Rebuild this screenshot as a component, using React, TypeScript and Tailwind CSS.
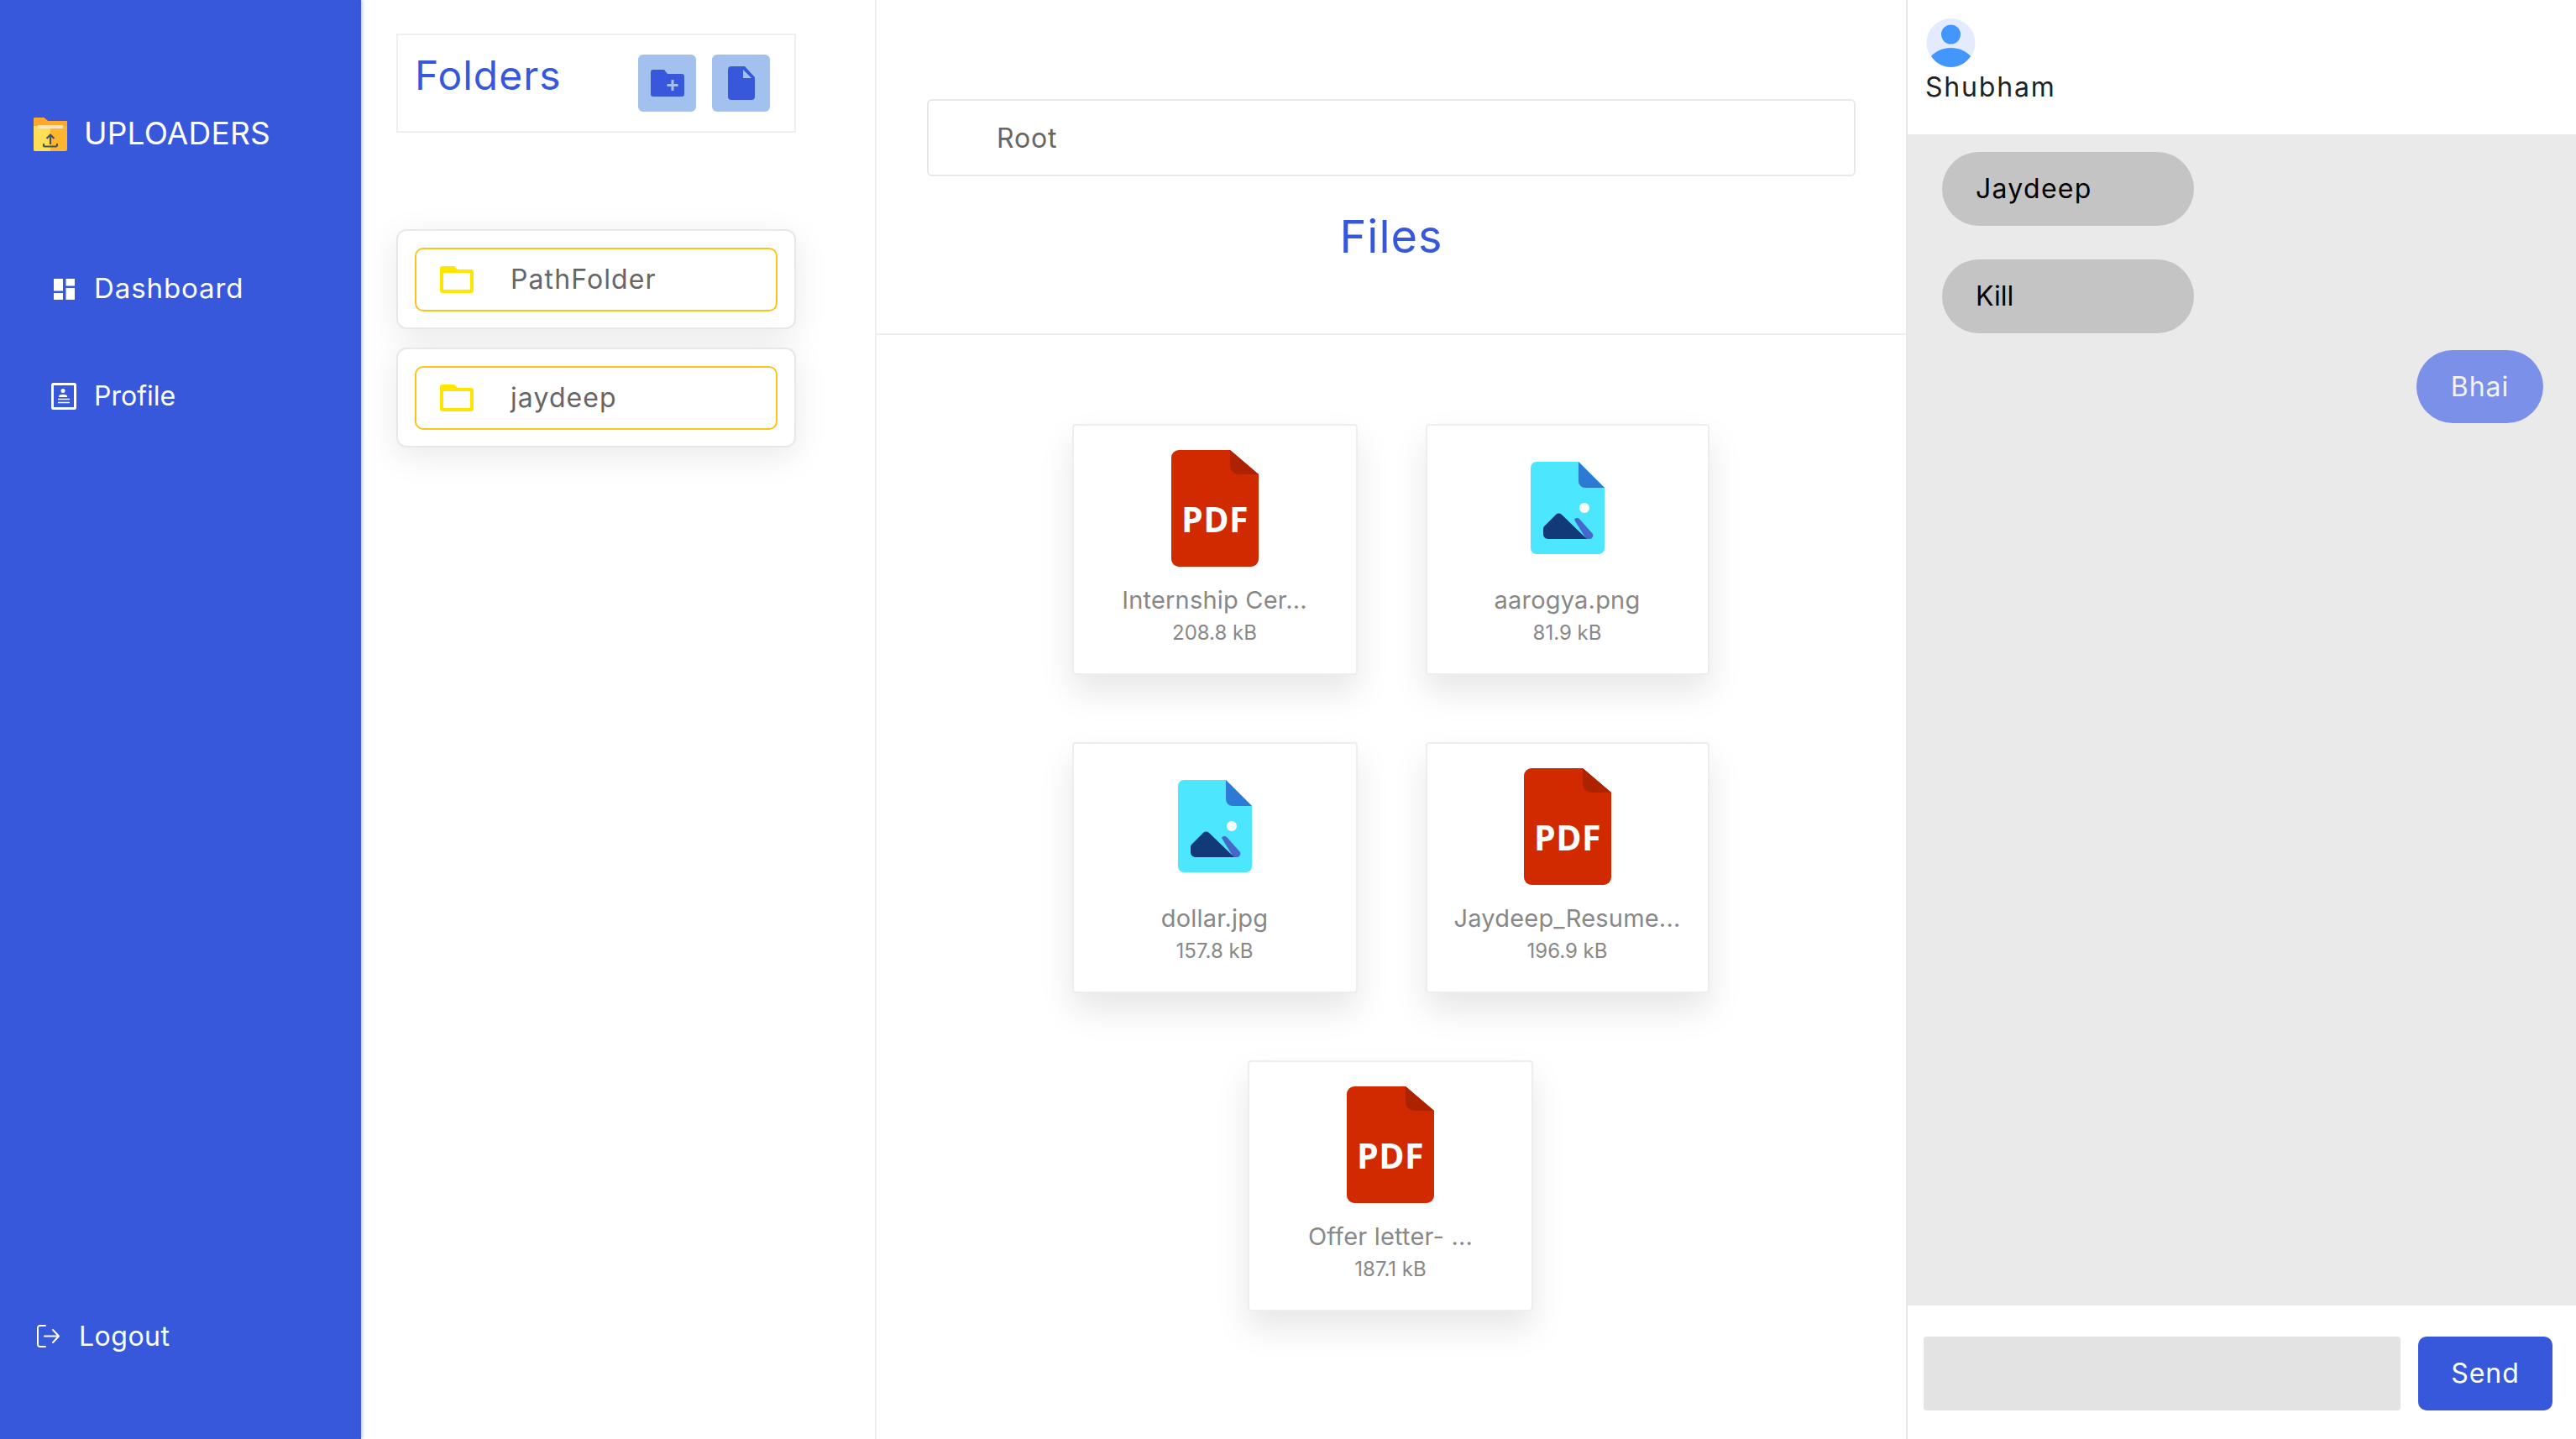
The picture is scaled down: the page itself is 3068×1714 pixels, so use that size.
const files = [
  { name: "Internship Cer...", size: "208.8 kB", type: "pdf", width: "w-[340px]" },
  { name: "aarogya.png", size: "81.9 kB", type: "image", width: "w-[338px]" },
  { name: "dollar.jpg", size: "157.8 kB", type: "image", width: "w-[340px]" },
  { name: "Jaydeep_Resume...", size: "196.9 kB", type: "pdf", width: "w-[338px]" },
  { name: "Offer letter- ...", size: "187.1 kB", type: "pdf", width: "w-[340px]" },
];

function LogoIcon() {
  return (
    <svg viewBox="0 0 40 40" className="w-[40px] h-[40px] shrink-0">
      <path d="M2 0h10l5 4h21a2 2 0 0 1 2 2v32a2 2 0 0 1-2 2H2a2 2 0 0 1-2-2V2a2 2 0 0 1 2-2z" fill="#ffb52e" />
      <path d="M0 10h20v30H2a2 2 0 0 1-2-2z" fill="#ffdf55" />
      <path d="M0 2a2 2 0 0 1 2-2h10l5 4h23v6H0z" fill="#ffa82c" />
      <rect x="5" y="9" width="30" height="4" fill="#fbe6c4" />
      <path d="M20 32v-11M15.500 25l4.500-4.500 4.500 4.500M12 31v2a1.500 1.500 0 0 0 1.500 1.500h13a1.500 1.500 0 0 0 1.500-1.500v-2" fill="none" stroke="#4a5260" strokeWidth="2.200" />
    </svg>
  );
}

function DashboardIcon() {
  return (
    <svg viewBox="0 0 25 25" className="w-[25px] h-[25px] fill-white">
      <rect x="0" y="0" width="11" height="14.500" />
      <rect x="14.500" y="0" width="10.500" height="8.500" />
      <rect x="0" y="17" width="11" height="8" />
      <rect x="14.500" y="11" width="10.500" height="14" />
    </svg>
  );
}

function ProfileIcon() {
  return (
    <svg viewBox="0 0 30 32" className="w-[30px] h-[32px]">
      <rect x="1.500" y="1.500" width="27" height="29" rx="1" fill="none" stroke="#fff" strokeWidth="3" />
      <circle cx="14" cy="9.500" r="2.500" fill="#fff" />
      <path d="M9 16c0-3 10-3 10 0v1H9z" fill="#fff" />
      <path d="M8 19.500h14M8 23.500h14" stroke="#fff" strokeWidth="1.500" />
    </svg>
  );
}

function LogoutIcon() {
  return (
    <svg viewBox="0 0 27 27" className="w-[27px] h-[27px]" fill="none" stroke="#fff" strokeWidth="2" strokeLinecap="round" strokeLinejoin="round">
      <path d="M10 1H3.500A2.500 2.500 0 0 0 1 3.500v20A2.500 2.500 0 0 0 3.500 26H10" />
      <path d="M9 13.500h17M19 6l7 7.500-7 7.500" />
    </svg>
  );
}

function FolderOutline() {
  return (
    <svg viewBox="0 0 40 32" className="w-[40px] h-[32px] shrink-0">
      <path
        fillRule="evenodd"
        d="M3 0h14l4 4h16a3 3 0 0 1 3 3v22a3 3 0 0 1-3 3H3a3 3 0 0 1-3-3V3a3 3 0 0 1 3-3zM4 8v20h32V8z"
        fill="#ffe600"
      />
    </svg>
  );
}

function NewFolderIcon() {
  return (
    <svg viewBox="0 0 40 32" className="w-[40px] h-[32px]">
      <path d="M3 0h13l4 5h17a3 3 0 0 1 3 3v21a3 3 0 0 1-3 3H3a3 3 0 0 1-3-3V3a3 3 0 0 1 3-3z" fill="#3858dc" />
      <path d="M26 12v13M19.500 18.500h13" stroke="#a3c1ef" strokeWidth="3" />
    </svg>
  );
}

function NewFileIcon() {
  return (
    <svg viewBox="0 0 32 40" className="w-[32px] h-[40px]">
      <path d="M4 0h16l12 13v23a4 4 0 0 1-4 4H4a4 4 0 0 1-4-4V4a4 4 0 0 1 4-4z" fill="#3858dc" />
      <path d="M18 4v10h10z" fill="#a3c1ef" />
    </svg>
  );
}

function PdfIcon() {
  return (
    <svg viewBox="0 0 104 139" className="w-[104px] h-[139px]">
      <path d="M9 0h61l34 29v101a9 9 0 0 1-9 9H9a9 9 0 0 1-9-9V9a9 9 0 0 1 9-9z" fill="#d22a00" />
      <path d="M70 0l34 29H80a10 10 0 0 1-10-10z" fill="#ad2300" />
      <text x="52" y="98" textAnchor="middle" fontFamily="'Open Sans', sans-serif" fontWeight="700" fontSize="41" letterSpacing="0.500" fill="#fff">
        PDF
      </text>
    </svg>
  );
}

function ImageIcon() {
  return (
    <svg viewBox="0 0 88 110" className="w-[88px] h-[110px]">
      <path d="M7 0h50l31 31v72a7 7 0 0 1-7 7H7a7 7 0 0 1-7-7V7a7 7 0 0 1 7-7z" fill="#4de6ff" />
      <path d="M57 0l31 31H65a8 8 0 0 1-8-8z" fill="#2c7ad4" />
      <circle cx="64" cy="55" r="6" fill="#fff" />
      <path d="M52 69a4 4 0 0 1 6-1l16 18a4.500 4.500 0 0 1-3 6H66z" fill="#4568cc" />
      <path d="M30 63a5 5 0 0 1 7 0l30 29H21c-4 0-6-3-6-6v-6a5 5 0 0 1 1-3z" fill="#123a78" />
    </svg>
  );
}

function Avatar() {
  return (
    <svg viewBox="0 0 59 58" className="w-[59px] h-[58px] block">
      <circle cx="29.500" cy="29" r="29" fill="#e4ebff" />
      <circle cx="29.500" cy="19" r="11.500" fill="#4297ff" />
      <path d="M6 45c5-6 14-10 23.500-10S48 39 53 45c-5.500 8-14 13-23.500 13S11.500 53 6 45z" fill="#4297ff" />
    </svg>
  );
}

function FolderCard({ name }: { name: string }) {
  return (
    <div className="h-[119px] rounded-[12px] border-2 border-[#e8e8e8] bg-white px-[20px] flex items-center shadow-[0_10px_40px_rgba(0,0,0,0.09)]">
      <div className="w-full h-[76px] rounded-[10px] border-2 border-[#fcc419] flex items-center pl-[28px] gap-[44px]">
        <FolderOutline />
        <span className="text-[32px] text-[#666] tracking-[1.1px]">{name}</span>
      </div>
    </div>
  );
}

function FileCard({ name, size, type, width }: { name: string; size: string; type: string; width: string }) {
  return (
    <div className={`${width} h-[299px] rounded-[4px] border-2 border-[#eee] bg-white flex flex-col items-center shadow-[0_20px_40px_rgba(0,0,0,0.1)]`}>
      <div className="h-[188px] pt-[8px] flex items-center justify-center">
        {type === "pdf" ? <PdfIcon /> : <ImageIcon />}
      </div>
      <div className="text-[29px] leading-[40px] text-[#888] tracking-[0.2px] whitespace-nowrap">{name}</div>
      <div className="mt-[1px] text-[24px] leading-[36px] text-[#888]">{size}</div>
    </div>
  );
}

export default function App() {
  return (
    <div className="h-screen grid grid-cols-[430px_612px_1228px_798px] overflow-hidden bg-white font-['Inter',sans-serif]">
      <aside className="bg-[#3858dc] flex flex-col text-white shadow-[2px_0_3px_rgba(56,88,220,0.3)] z-10">
        <div className="mt-[140px] ml-[40px] flex items-center gap-[20px]">
          <LogoIcon />
          <span className="pb-[2px] text-[37px] leading-[38px] tracking-[0.2px]">UPLOADERS</span>
        </div>
        <div className="mt-[148px] ml-[61px] flex items-center h-[32px]">
          <div className="w-[30px] flex justify-center">
            <DashboardIcon />
          </div>
          <span className="ml-[21px] text-[33px] tracking-[0.9px]">Dashboard</span>
        </div>
        <div className="mt-[96px] ml-[61px] flex items-center h-[32px]">
          <ProfileIcon />
          <span className="ml-[21px] text-[32px] tracking-[0px]">Profile</span>
        </div>
        <div className="mt-auto mb-[109px] ml-[44px] flex items-center gap-[23px]">
          <LogoutIcon />
          <span className="text-[32px] leading-[27px] tracking-[0.5px]">Logout</span>
        </div>
      </aside>

      <section className="pl-[42px] pr-[94px] pt-[40px] flex flex-col">
        <div className="h-[118px] border-2 border-[#eee] pl-[20px] pr-[29px] flex items-start justify-between">
          <h2 className="mt-[18px] text-[48px] leading-[60px] text-[#3858dc] tracking-[1px]">Folders</h2>
          <div className="mt-[23px] flex gap-[19px]">
            <button className="w-[69px] h-[68px] rounded-[6px] bg-[#a3c1ef] flex items-center justify-center">
              <NewFolderIcon />
            </button>
            <button className="w-[69px] h-[68px] rounded-[6px] bg-[#a3c1ef] flex items-center justify-center">
              <NewFileIcon />
            </button>
          </div>
        </div>
        <div className="mt-[115px] flex flex-col gap-[22px]">
          <FolderCard name="PathFolder" />
          <FolderCard name="jaydeep" />
        </div>
      </section>

      <main className="border-l-2 border-[#eee] flex flex-col">
        <div className="h-[399px] border-b-2 border-[#eee] px-[60px] pt-[118px] flex flex-col">
          <div className="h-[92px] border-2 border-[#e8e8e8] rounded-[6px] pl-[81px] pt-[2px] flex items-center text-[32px] text-[#666] tracking-[0.8px]">
            Root
          </div>
          <h1 className="mt-[40px] text-center text-[54px] leading-[64px] text-[#3858dc] tracking-[1px]">Files</h1>
        </div>
        <div className="pt-[106px] flex flex-wrap justify-center gap-x-[81px] gap-y-[80px] ml-[98px] mr-[100px]">
          {files.map((file) => (
            <FileCard key={file.name} {...file} />
          ))}
        </div>
      </main>

      <aside className="border-l-2 border-[#e8e8e8] flex flex-col">
        <div className="h-[160px] pl-[21px] pt-[22px]">
          <div className="pl-[1px]">
            <Avatar />
          </div>
          <div className="mt-[4px] text-[32px] leading-[40px] text-[#222] tracking-[1.8px]">Shubham</div>
        </div>
        <div className="flex-1 bg-[#eaeaea] pl-[41px] pr-[39px] pt-[21px] flex flex-col">
          <div className="w-[300px] h-[88px] rounded-full bg-[#c4c4c4] pl-[40px] flex items-center text-[32px] text-black tracking-[1.3px]">Jaydeep</div>
          <div className="mt-[40px] w-[300px] h-[88px] rounded-full bg-[#c4c4c4] pl-[40px] flex items-center text-[32px] text-black tracking-[0px]">Kill</div>
          <div className="mt-[20px] self-end w-[151px] h-[87px] rounded-full bg-[#7b90e8] flex items-center justify-center text-[32px] text-[#f2f2f2] tracking-[1px]">Bhai</div>
        </div>
        <div className="h-[159px] pl-[19px] pr-[28px] pt-[37px] flex gap-[21px]">
          <div className="w-[568px] h-[88px] rounded-[4px] bg-[#e3e3e3]" />
          <button className="w-[160px] h-[88px] rounded-[10px] bg-[#3858dc] text-white text-[32px] tracking-[1px]">Send</button>
        </div>
      </aside>
    </div>
  );
}
